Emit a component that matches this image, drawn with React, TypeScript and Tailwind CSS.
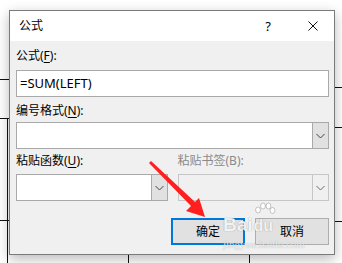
import React from "react";

const font = { fontFamily: '"Noto Sans", "Noto Sans CJK SC", sans-serif' };

function Chevron({ color = "#444" }: { color?: string }) {
  return (
    <svg width="9" height="6" viewBox="0 0 9 6">
      <polyline points="0.5,1 4.5,5 8.5,1" fill="none" stroke={color} strokeWidth="1" />
    </svg>
  );
}

function Combo({ disabled = false }: { disabled?: boolean }) {
  return (
    <div
      className={
        disabled
          ? "flex h-[27px] border border-[#c6c6c6] bg-[#f0f0f0]"
          : "flex h-[27px] border border-[#a9a9a9] bg-white"
      }
    >
      <div className="flex-1" />
      <div
        className={
          disabled
            ? "flex w-[16px] items-center justify-center border-l border-[#c6c6c6] bg-[#f0f0f0]"
            : "flex w-[16px] items-center justify-center border-l border-[#a9a9a9] bg-[#e1e1e1]"
        }
      >
        <Chevron color={disabled ? "#6d6d6d" : "#444"} />
      </div>
    </div>
  );
}

export default function App() {
  return (
    <div
      className="relative h-[263px] w-[342px] overflow-hidden bg-white pl-[9px] pt-[10px] text-black"
      style={font}
    >
      <svg className="absolute left-0 top-0" width="342" height="263">
        <g stroke="#111" strokeWidth="1">
          <line x1="0" y1="79.5" x2="10" y2="79.5" />
          <line x1="0" y1="118.5" x2="10" y2="118.5" />
          <line x1="7.5" y1="118" x2="7.5" y2="263" />
          <line x1="0" y1="220.5" x2="10" y2="220.5" />
          <line x1="334" y1="87.5" x2="342" y2="87.5" />
          <line x1="334" y1="127.5" x2="342" y2="127.5" />
          <line x1="334" y1="221.5" x2="342" y2="221.5" />
          <line x1="128.5" y1="254" x2="128.5" y2="263" />
          <line x1="249.5" y1="254" x2="249.5" y2="263" />
        </g>
      </svg>

      <div className="relative flex h-[245px] w-[326px] flex-col border border-[#7a7a7a] bg-[#f0f0f0] shadow-[0_4px_12px_rgba(0,0,0,0.28)]">
        <div className="flex h-[30px] items-center bg-white pl-[9px] pr-[16px]">
          <span className="text-[12px] leading-[16px]">公式</span>
          <span className="ml-auto mr-[37px] text-[13px] leading-[16px]">?</span>
          <svg width="10" height="10" viewBox="0 0 10 10">
            <line x1="0.5" y1="0.5" x2="9.5" y2="9.5" stroke="#111" strokeWidth="1" />
            <line x1="9.5" y1="0.5" x2="0.5" y2="9.5" stroke="#111" strokeWidth="1" />
          </svg>
        </div>

        <div className="flex flex-1 flex-col pl-[6px] pr-[5px]">
          <div className="mt-[7px] text-[12px] leading-[16px]">
            公式(<span className="underline underline-offset-2">F</span>):
          </div>
          <div className="mt-[6px] flex h-[27px] items-center border border-[#a9a9a9] bg-white pl-[3px] text-[13px]">
            =SUM(LEFT)
          </div>

          <div className="mt-[6px] text-[12px] leading-[16px]">
            编号格式(<span className="underline underline-offset-2">N</span>):
          </div>
          <div className="mt-[3px]">
            <Combo />
          </div>

          <div className="mt-[4px] grid grid-cols-2 gap-x-[10px] text-[12px] leading-[16px]">
            <div>
              粘贴函数(<span className="underline underline-offset-2">U</span>):
            </div>
            <div className="text-[#8a8a8a]">粘贴书签(B):</div>
          </div>
          <div className="mt-[5px] grid grid-cols-2 gap-x-[10px]">
            <Combo />
            <Combo disabled />
          </div>

          <div className="mt-[17px] flex justify-end gap-[10px]">
            <div className="flex h-[27px] w-[74px] items-center justify-center border-2 border-[#0078d7] bg-[#e1e1e1] text-[12px]">
              确定
            </div>
            <div className="flex h-[27px] w-[74px] items-center justify-center border border-[#adadad] bg-[#e1e1e1] text-[12px]">
              取消
            </div>
          </div>
        </div>
      </div>

      {/* Baidu watermark */}
      <div className="pointer-events-none absolute left-[223px] top-[214px] flex flex-col items-start">
        <div className="flex items-end text-[19px] font-bold leading-[22px] text-white/90 [text-shadow:0_0_1px_rgba(0,0,0,0.45)]">
          <span style={{ fontFamily: '"Liberation Sans", sans-serif' }}>Bai</span>
          <span className="relative ml-[1px] text-[16px] leading-[20px]" style={{ fontFamily: '"Liberation Sans", sans-serif' }}>
            <svg className="absolute -top-[14px] left-[0px]" width="22" height="16" viewBox="0 0 22 16">
              <g fill="white" fillOpacity="0.9" stroke="rgba(0,0,0,0.3)" strokeWidth="0.7">
                <ellipse cx="4" cy="8" rx="2.4" ry="3" />
                <ellipse cx="9" cy="4" rx="2.4" ry="3" />
                <ellipse cx="14.5" cy="4" rx="2.4" ry="3" />
                <ellipse cx="18.5" cy="8.5" rx="2.4" ry="3" />
              </g>
            </svg>
            du
          </span>
        </div>
        <div
          className="mt-[3px] text-[11px] leading-[11px] text-white/80 [text-shadow:0_0_1px_rgba(0,0,0,0.35)]"
          style={{ fontFamily: '"Liberation Serif", serif' }}
        >
          jingyan.baidu.com
        </div>
      </div>

      {/* Red arrow */}
      <svg className="pointer-events-none absolute left-0 top-0" width="342" height="263">
        <polygon
          points="149,163 151,161 195,202 199,198 205,217 186,211 191,206"
          fill="#ff1f1f"
        />
      </svg>
    </div>
  );
}
